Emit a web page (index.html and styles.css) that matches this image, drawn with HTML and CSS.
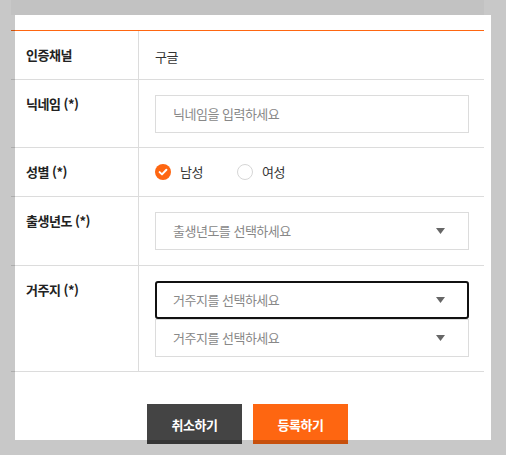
FILE: index.html
```html
<!DOCTYPE html>
<html lang="ko">
<head>
<meta charset="utf-8">
<title>회원정보 입력</title>
<link rel="stylesheet" href="styles.css">
</head>
<body>
<div class="screen">
  <div class="topband"></div>
  <div class="form">
    <div class="row">
      <div class="label">인증채널</div>
      <div class="value value-text">구글</div>
    </div>
    <div class="row">
      <div class="label">닉네임 (*)</div>
      <div class="value value-field value-tight">
        <div class="field"><span class="ph">닉네임을 입력하세요</span></div>
      </div>
    </div>
    <div class="row">
      <div class="label">성별 (*)</div>
      <div class="value value-radio">
        <span class="radio radio-on">
          <svg width="16" height="16" viewBox="0 0 16 16"><circle cx="8" cy="8" r="8" fill="#fe6611"/><path d="M4.6 8.1 L7 10.4 L11.4 5.8" fill="none" stroke="#fff" stroke-width="2" stroke-linecap="round" stroke-linejoin="round"/></svg>
          <span>남성</span>
        </span>
        <span class="radio">
          <svg width="16" height="16" viewBox="0 0 16 16"><circle cx="8" cy="8" r="7.5" fill="#fff" stroke="#d6d6d6"/></svg>
          <span>여성</span>
        </span>
      </div>
    </div>
    <div class="row">
      <div class="label">출생년도 (*)</div>
      <div class="value value-field">
        <div class="field select"><span class="ph">출생년도를 선택하세요</span>
          <svg class="arrow" width="9" height="6" viewBox="0 0 9 6"><path d="M0 0 H9 L4.5 6 Z" fill="#666"/></svg>
        </div>
      </div>
    </div>
    <div class="row">
      <div class="label">거주지 (*)</div>
      <div class="value value-field value-tight">
        <div class="field select focus"><span class="ph">거주지를 선택하세요</span>
          <svg class="arrow" width="9" height="6" viewBox="0 0 9 6"><path d="M0 0 H9 L4.5 6 Z" fill="#666"/></svg>
        </div>
        <div class="field select"><span class="ph">거주지를 선택하세요</span>
          <svg class="arrow" width="9" height="6" viewBox="0 0 9 6"><path d="M0 0 H9 L4.5 6 Z" fill="#666"/></svg>
        </div>
      </div>
    </div>
  </div>
  <div class="actions">
    <button class="btn btn-cancel">취소하기</button>
    <button class="btn btn-submit">등록하기</button>
  </div>
  <div class="dim"></div>
</div>
</body>
</html>
```
FILE: styles.css
```css
* { box-sizing: border-box; }
html, body { margin: 0; padding: 0; }
body {
  font-family: "Noto Sans CJK KR", "Noto Sans", sans-serif;
  font-size: 13px;
  letter-spacing: -0.5px;
  color: #333;
  background: #fff;
}
.screen {
  position: relative;
  width: 506px;
  height: 455px;
  overflow: hidden;
  background: #fff;
}
.topband {
  margin-left: 11px;
  width: 473px;
  height: 15px;
  background: #f8f8f8;
}
.form {
  margin: 15px 0 0 11px;
  width: 473px;
  border-top: 1px solid #fe6611;
}
.row {
  display: grid;
  grid-template-columns: 128px 1fr;
  border-bottom: 1px solid #dcdcdc;
}
.label {
  border-right: 1px solid #dcdcdc;
  padding: 14px 10px 14px 15px;
  line-height: 20px;
  font-weight: 700;
  color: #222;
}
.value {
  padding: 15px 15px 15px 16px;
  line-height: 20px;
}
.value-text { padding-top: 16px; padding-bottom: 12px; color: #333; }
.value-tight { padding-bottom: 14px; }
.value-radio {
  display: flex;
  align-items: center;
  padding-top: 14px;
  padding-bottom: 14px;
}
.radio {
  display: inline-flex;
  align-items: center;
  gap: 9px;
  color: #333;
  margin-right: 34px;
}
.radio svg { display: block; }
.field {
  height: 38px;
  border: 1px solid #dcdcdc;
  display: flex;
  align-items: center;
  padding-left: 17px;
  padding-right: 23px;
  background: #fff;
}
.select { justify-content: space-between; }
.select.focus {
  border: 2px solid #111;
  border-radius: 3px;
  padding-left: 16px;
  padding-right: 22px;
}
.ph { color: #888; }
.arrow { display: block; }
.actions {
  display: flex;
  justify-content: center;
  gap: 11px;
  margin-top: 32px;
  width: 473px;
  margin-left: 11px;
}
.btn {
  width: 95px;
  height: 40px;
  border: 0;
  font-family: inherit;
  font-size: 13px;
  font-weight: 700;
  letter-spacing: -0.5px;
  color: #fff;
  cursor: pointer;
  padding: 0;
}
.btn-cancel { background: #444; }
.btn-submit { background: #fe6611; }
.dim {
  position: absolute;
  left: 15px;
  top: 15px;
  width: 476px;
  height: 425px;
  box-shadow: 0 0 0 600px rgba(0, 0, 0, 0.216);
  pointer-events: none;
}
```
